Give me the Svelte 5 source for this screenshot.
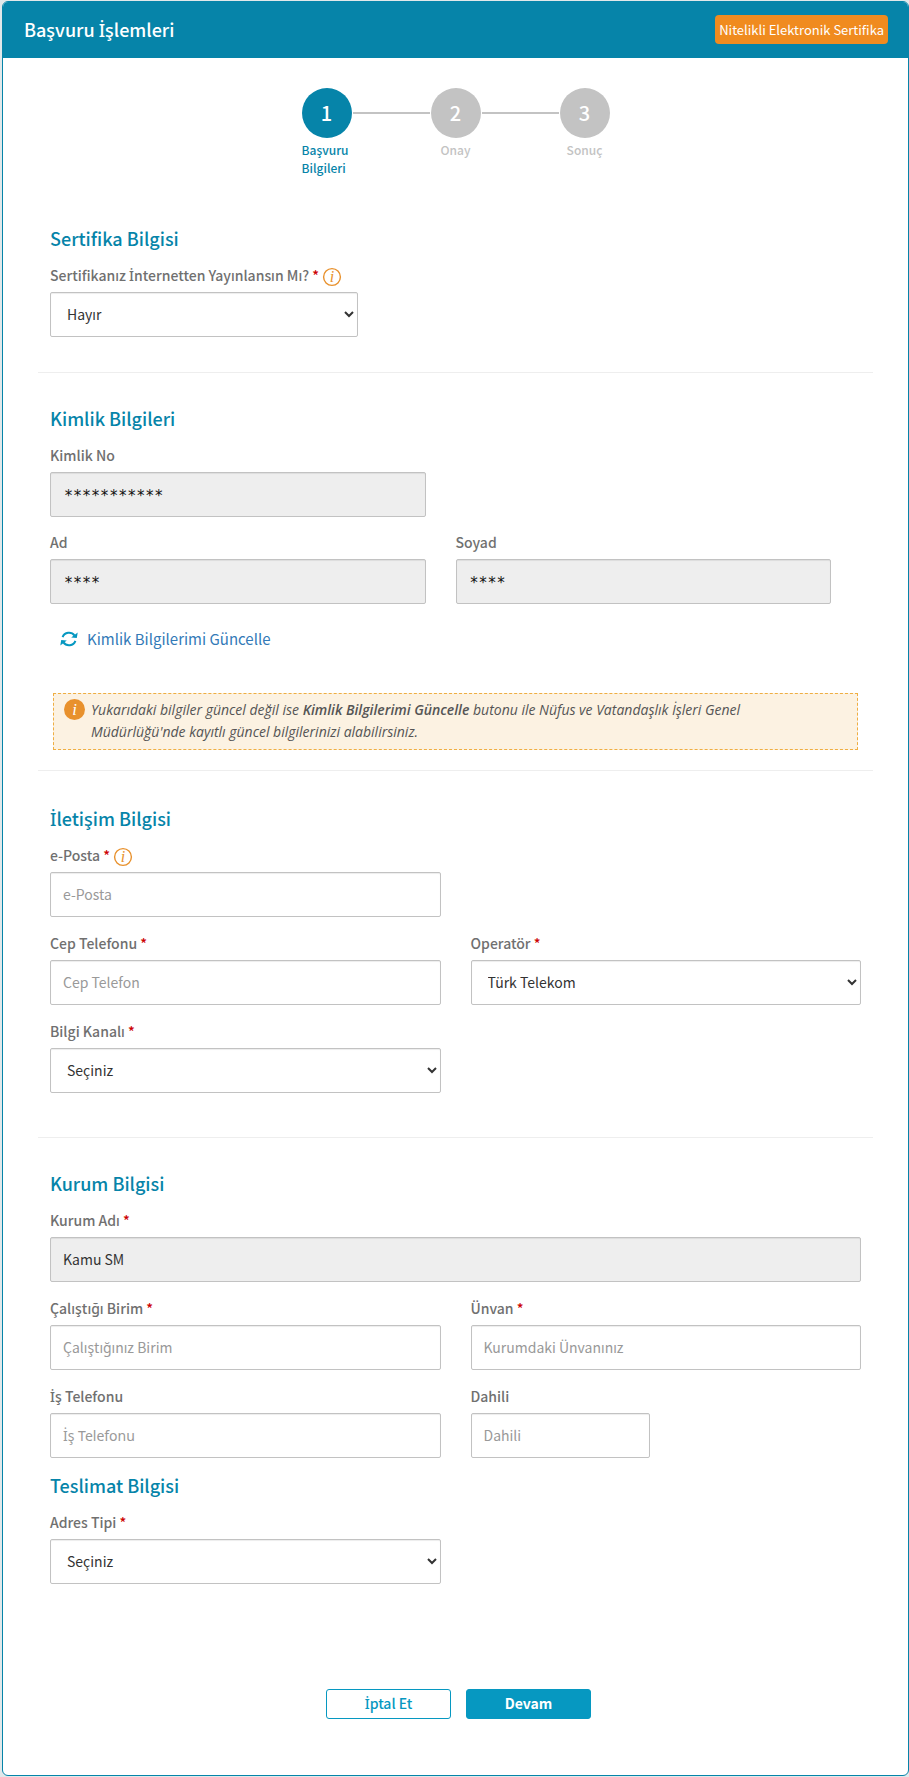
<script>
  let publish = $state('Hayır');
  let operator = $state('Türk Telekom');
  let channel = $state('');
  let addressType = $state('');

  const steps = [
    { no: 1, title: 'Başvuru Bilgileri', active: true },
    { no: 2, title: 'Onay', active: false },
    { no: 3, title: 'Sonuç', active: false }
  ];
</script>

{#snippet star()}
  <span class="required">*</span>
{/snippet}

<!-- the main font has no dotted capital I -->
{#snippet dotted()}<span class="dotted">İ</span>{/snippet}

{#snippet info()}
  <svg class="info" viewBox="0 0 20 20" aria-hidden="true">
    <circle cx="10" cy="10" r="8.4" />
    <text x="10" y="15" text-anchor="middle">i</text>
  </svg>
{/snippet}

<div class="card">
  <header>
    <h1>Başvuru {@render dotted()}şlemleri</h1>
    <span class="badge">Nitelikli Elektronik Sertifika</span>
  </header>

  <ol class="steps">
    {#each steps as step}
      <li class:active={step.active}>
        <span class="circle">{step.no}</span>
        <span class="title">{step.title}</span>
      </li>
    {/each}
  </ol>

  <form onsubmit={(e) => e.preventDefault()}>
    <section class="certificate">
      <h2>Sertifika Bilgisi</h2>
      <div class="field short">
        <label for="publish">Sertifikanız {@render dotted()}nternetten Yayınlansın Mı? {@render star()} {@render info()}</label>
        <select id="publish" bind:value={publish}>
          <option>Hayır</option>
          <option>Evet</option>
        </select>
      </div>
    </section>

    <section class="identity">
      <h2>Kimlik Bilgileri</h2>
      <div class="grid narrow">
        <div class="field first">
          <label for="identityNo">Kimlik No</label>
          <input id="identityNo" class="masked" value="***********" readonly />
        </div>
        <div class="field first">
          <label for="name">Ad</label>
          <input id="name" class="masked" value="****" readonly />
        </div>
        <div class="field">
          <label for="surname">Soyad</label>
          <input id="surname" class="masked" value="****" readonly />
        </div>
      </div>
      <a class="refresh" href="#guncelle">
        <svg viewBox="0 0 18 16" aria-hidden="true">
          <path class="arc" d="M2.6 6.2C4.4 1 11.4 0.2 14.6 4.6" />
          <path class="arc" d="M15.4 9.8C13.6 15 6.6 15.8 3.4 11.4" />
          <path d="M17.7 1.6 16.8 7 11.2 6.5z" />
          <path d="M.3 14.4 1.2 9 6.8 9.5z" />
        </svg>
        Kimlik Bilgilerimi Güncelle
      </a>
      <div class="note">
        <svg class="info filled" viewBox="0 0 20 20" aria-hidden="true">
          <circle cx="10" cy="10" r="10" />
          <text x="10" y="15" text-anchor="middle">i</text>
        </svg>
        <p>Yukarıdaki bilgiler güncel değil ise <b>Kimlik Bilgilerimi Güncelle</b> butonu ile Nüfus ve Vatandaşlık İşleri Genel Müdürlüğü'nde kayıtlı güncel bilgilerinizi alabilirsiniz.</p>
      </div>
    </section>

    <section class="contact">
      <h2>{@render dotted()}letişim Bilgisi</h2>
      <div class="grid">
        <div class="field first">
          <label for="email">e-Posta {@render star()} {@render info()}</label>
          <input id="email" type="email" placeholder="e-Posta" />
        </div>
        <div class="field first">
          <label for="mobile">Cep Telefonu {@render star()}</label>
          <input id="mobile" type="tel" placeholder="Cep Telefon" />
        </div>
        <div class="field">
          <label for="operator">Operatör {@render star()}</label>
          <select id="operator" bind:value={operator}>
            <option>Türk Telekom</option>
            <option>Turkcell</option>
            <option>Vodafone</option>
          </select>
        </div>
        <div class="field first">
          <label for="channel">Bilgi Kanalı {@render star()}</label>
          <select id="channel" bind:value={channel}>
            <option value="">Seçiniz</option>
          </select>
        </div>
      </div>
    </section>

    <section class="company">
      <h2>Kurum Bilgisi</h2>
      <div class="grid">
        <div class="field full">
          <label for="company">Kurum Adı {@render star()}</label>
          <input id="company" value="Kamu SM" readonly />
        </div>
        <div class="field">
          <label for="unit">Çalıştığı Birim {@render star()}</label>
          <input id="unit" placeholder="Çalıştığınız Birim" />
        </div>
        <div class="field">
          <label for="jobTitle">Ünvan {@render star()}</label>
          <input id="jobTitle" placeholder="Kurumdaki Ünvanınız" />
        </div>
        <div class="field">
          <label for="phone">{@render dotted()}ş Telefonu</label>
          <input id="phone" class="phone" type="tel" placeholder="İş Telefonu" />
        </div>
        <div class="field extension">
          <label for="extension">Dahili</label>
          <input id="extension" placeholder="Dahili" />
        </div>
      </div>

      <h2 class="delivery">Teslimat Bilgisi</h2>
      <div class="grid">
        <div class="field">
          <label for="addressType">Adres Tipi {@render star()}</label>
          <select id="addressType" bind:value={addressType}>
            <option value="">Seçiniz</option>
          </select>
        </div>
      </div>
    </section>

    <div class="actions">
      <button type="button" class="cancel">{@render dotted()}ptal Et</button>
      <button type="submit" class="next">Devam</button>
    </div>
  </form>
</div>

<style>
  :global(body) {
    background: #e1e8ea;
  }
  * {
    box-sizing: border-box;
  }
  .card {
    margin: 1px 0 2px 2px;
    background: #fff;
    border: 1px solid #0684a9;
    border-radius: 6px;
    overflow: hidden;
    font-family: "Source Sans Pro", "Noto Sans CJK JP", "Noto Sans", sans-serif;
    font-size: 15px;
    color: #333;
  }
  .dotted {
    font-family: "Noto Sans", sans-serif;
    line-height: 1;
  }
  header {
    display: flex;
    align-items: center;
    justify-content: space-between;
    height: 56px;
    padding: 0 20px 2px 21px;
    background: #0684a9;
    color: #fff;
  }
  h1 {
    margin: 0;
    font-size: 18px;
    font-weight: 500;
  }
  .badge {
    padding: 0 4px;
    border-radius: 4px;
    background: #f08b1f;
    font-size: 13px;
    line-height: 29px;
  }
  .steps {
    display: flex;
    justify-content: center;
    gap: 79px;
    margin: 0;
    padding: 30px 0 0;
    list-style: none;
  }
  .steps li {
    position: relative;
    display: flex;
    flex-direction: column;
    align-items: center;
    gap: 3px;
    width: 50px;
    height: 90px;
    color: #c3c3c3;
  }
  .steps li + li::before {
    content: "";
    position: absolute;
    top: 24px;
    right: 51px;
    width: 77px;
    height: 2px;
    background: #c3c3c3;
  }
  .circle {
    width: 50px;
    height: 50px;
    border-radius: 50%;
    background: #c3c3c3;
    color: #fff;
    font-size: 20px;
    font-weight: 500;
    line-height: 50px;
    text-align: center;
  }
  .title {
    font-size: 12px;
    font-weight: 500;
    line-height: 18px;
  }
  .active .circle {
    background: #0684a9;
  }
  .steps .active {
    color: #0684a9;
  }
  form {
    padding: 0 35px;
  }
  section {
    padding: 32px 12px 0;
    border-bottom: 1px solid #eee;
  }
  .certificate {
    padding-top: 47px;
    padding-bottom: 35px;
  }
  .identity {
    padding-bottom: 20px;
  }
  .contact {
    padding-top: 34px;
    padding-bottom: 44px;
  }
  .company {
    border-bottom: 0;
  }
  h2 {
    margin: 0 0 14px;
    color: #0684a9;
    font-size: 18px;
    font-weight: 500;
    line-height: 26px;
  }
  h2.delivery {
    margin-top: 14px;
  }
  .grid {
    display: grid;
    grid-template-columns: 1fr 1fr;
    gap: 16px 30px;
  }
  .narrow {
    margin-right: 30px;
    row-gap: 15px;
  }
  .first {
    grid-column: 1;
  }
  .full {
    grid-column: 1 / -1;
  }
  .short {
    width: 38%;
  }
  .extension {
    width: 46%;
  }
  label {
    display: block;
    height: 22px;
    margin-bottom: 5px;
    color: #707070;
    font-size: 14px;
    font-weight: 500;
    line-height: 20px;
    white-space: nowrap;
  }
  .required {
    color: #c00;
  }
  .info {
    width: 20px;
    height: 20px;
    fill: none;
    stroke: #e8912d;
    stroke-width: 1.4;
    vertical-align: -6px;
  }
  .info text {
    fill: #e8912d;
    stroke: none;
    font: italic 16px "Liberation Serif", serif;
  }
  .info.filled {
    flex: none;
    width: 21px;
    height: 21px;
    fill: #e8912d;
    stroke: none;
  }
  .info.filled text {
    fill: #fff;
  }
  input,
  select {
    display: block;
    width: 100%;
    height: 45px;
    padding: 6px 12px 8px;
    border: 1px solid #c2c2c2;
    border-radius: 2px;
    background: #fff;
    box-shadow: inset 0 1px 1px rgba(0, 0, 0, 0.075);
    color: #333;
    font-family: inherit;
    font-size: 14px;
  }
  input::placeholder {
    color: #999;
    opacity: 1;
  }
  input.phone::placeholder {
    font-family: "Noto Sans", sans-serif;
  }
  input:read-only {
    background: #eee;
  }
  input.masked {
    padding: 8px 13px 6px;
    color: #111;
    font-family: "DejaVu Sans Mono", monospace;
    font-size: 15px;
  }
  .refresh {
    display: inline-flex;
    align-items: center;
    gap: 9px;
    margin: 23px 0 42px 10px;
    color: #337ab7;
    font-size: 15px;
    line-height: 24px;
    text-decoration: none;
  }
  .refresh svg {
    width: 18px;
    height: 16px;
    fill: #0698c1;
  }
  .refresh .arc {
    fill: none;
    stroke: #0698c1;
    stroke-width: 2;
  }
  .note {
    display: flex;
    gap: 6px;
    margin: 0 3px;
    padding: 5px 80px 6px 10px;
    border: 1px dashed #efae42;
    background: #fcf2e2;
    color: #555;
    font-family: "Open Sans", "Noto Sans", sans-serif;
    font-size: 14px;
    font-style: italic;
    line-height: 22px;
  }
  .note p {
    margin: 0;
  }
  .note b {
    font-weight: 600;
  }
  .actions {
    display: flex;
    justify-content: center;
    gap: 15px;
    padding: 105px 0 56px 6px;
  }
  button {
    width: 125px;
    height: 30px;
    padding: 0 0 2px;
    border: 1px solid #0698c1;
    border-radius: 3px;
    font-family: inherit;
    font-size: 14px;
    font-weight: 500;
    cursor: pointer;
  }
  .cancel {
    background: #fff;
    color: #0698c1;
  }
  .next {
    background: #0698c1;
    color: #fff;
    font-weight: 700;
  }
</style>
